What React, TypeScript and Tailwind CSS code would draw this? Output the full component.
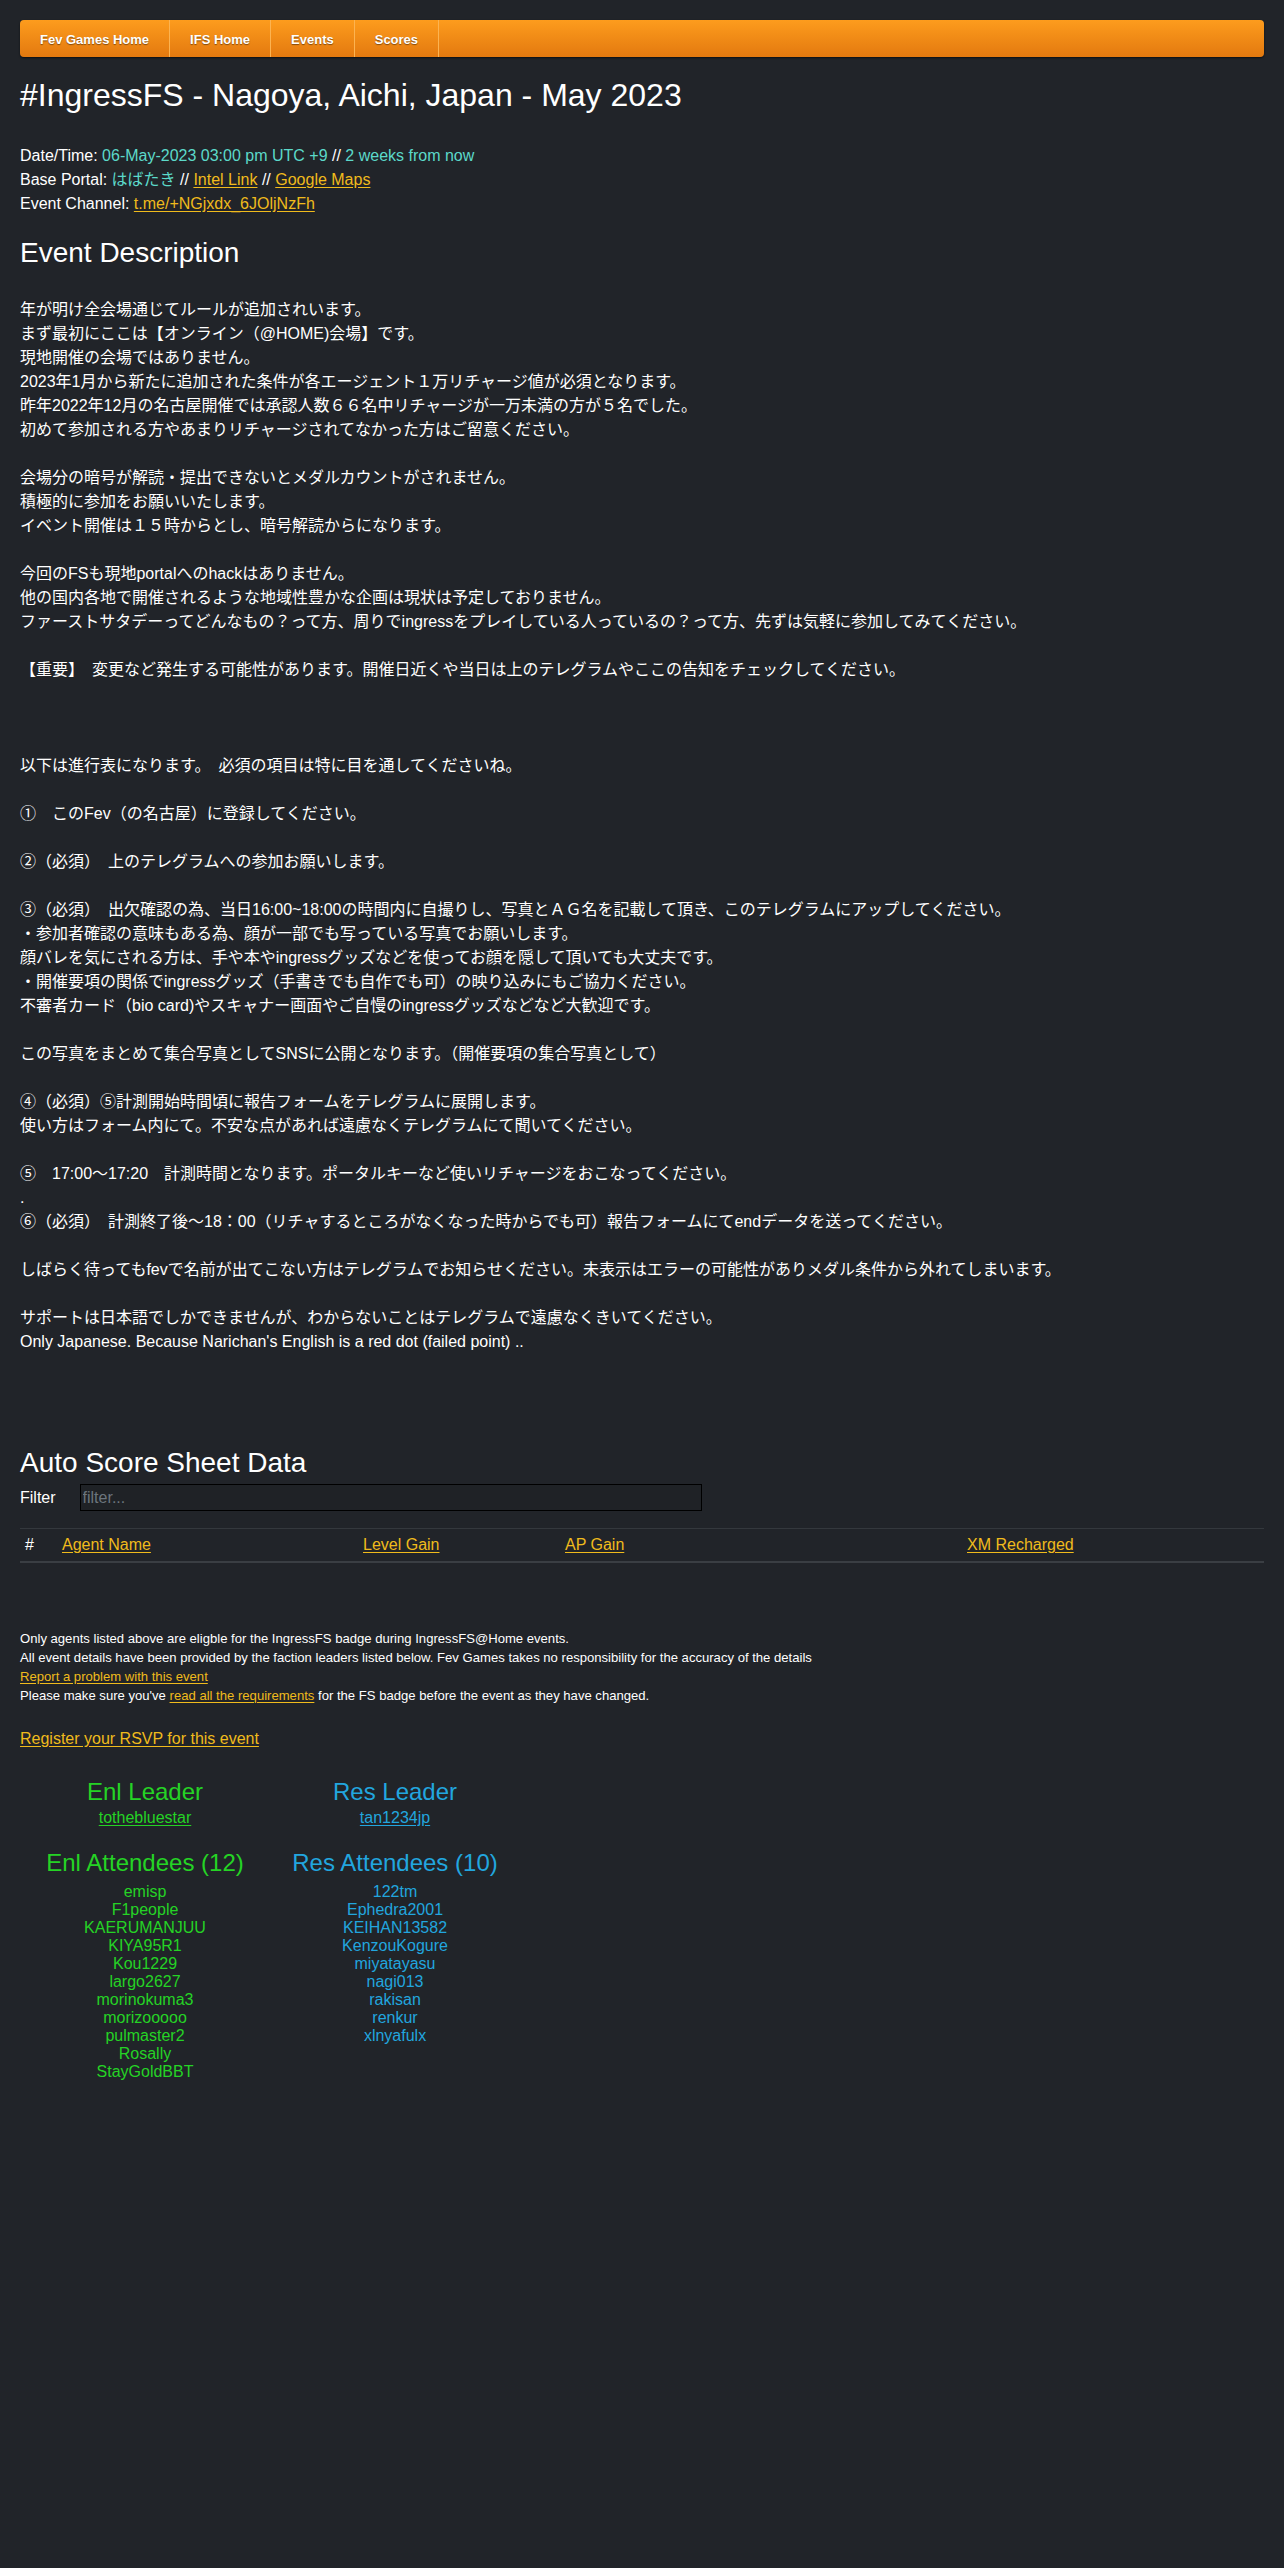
const navItems = ["Fev Games Home", "IFS Home", "Events", "Scores"];

const description: string[] = [
  "年が明け全会場通じてルールが追加されいます。",
  "まず最初にここは【オンライン（@HOME)会場】です。",
  "現地開催の会場ではありません。",
  "2023年1月から新たに追加された条件が各エージェント１万リチャージ値が必須となります。",
  "昨年2022年12月の名古屋開催では承認人数６６名中リチャージが一万未満の方が５名でした。",
  "初めて参加される方やあまりリチャージされてなかった方はご留意ください。",
  "",
  "会場分の暗号が解読・提出できないとメダルカウントがされません。",
  "積極的に参加をお願いいたします。",
  "イベント開催は１５時からとし、暗号解読からになります。",
  "",
  "今回のFSも現地portalへのhackはありません。",
  "他の国内各地で開催されるような地域性豊かな企画は現状は予定しておりません。",
  "ファーストサタデーってどんなもの？って方、周りでingressをプレイしている人っているの？って方、先ずは気軽に参加してみてください。",
  "",
  "【重要】　変更など発生する可能性があります。開催日近くや当日は上のテレグラムやここの告知をチェックしてください。",
  "",
  "",
  "",
  "以下は進行表になります。　必須の項目は特に目を通してくださいね。",
  "",
  "①　このFev（の名古屋）に登録してください。",
  "",
  "②（必須）　上のテレグラムへの参加お願いします。",
  "",
  "③（必須）　出欠確認の為、当日16:00~18:00の時間内に自撮りし、写真とＡＧ名を記載して頂き、このテレグラムにアップしてください。",
  "・参加者確認の意味もある為、顔が一部でも写っている写真でお願いします。",
  "顔バレを気にされる方は、手や本やingressグッズなどを使ってお顔を隠して頂いても大丈夫です。",
  "・開催要項の関係でingressグッズ（手書きでも自作でも可）の映り込みにもご協力ください。",
  "不審者カード（bio card)やスキャナー画面やご自慢のingressグッズなどなど大歓迎です。",
  "",
  "この写真をまとめて集合写真としてSNSに公開となります。（開催要項の集合写真として）",
  "",
  "④（必須）⑤計測開始時間頃に報告フォームをテレグラムに展開します。",
  "使い方はフォーム内にて。不安な点があれば遠慮なくテレグラムにて聞いてください。",
  "",
  "⑤　17:00～17:20　計測時間となります。ポータルキーなど使いリチャージをおこなってください。",
  ".",
  "⑥（必須）　計測終了後～18：00（リチャするところがなくなった時からでも可）報告フォームにてendデータを送ってください。",
  "",
  "しばらく待ってもfevで名前が出てこない方はテレグラムでお知らせください。未表示はエラーの可能性がありメダル条件から外れてしまいます。",
  "",
  "サポートは日本語でしかできませんが、わからないことはテレグラムで遠慮なくきいてください。",
  "Only Japanese. Because Narichan's English is a red dot (failed point) ..",
];

const enlAgents = [
  "emisp",
  "F1people",
  "KAERUMANJUU",
  "KIYA95R1",
  "Kou1229",
  "largo2627",
  "morinokuma3",
  "morizooooo",
  "pulmaster2",
  "Rosally",
  "StayGoldBBT",
];

const resAgents = [
  "122tm",
  "Ephedra2001",
  "KEIHAN13582",
  "KenzouKogure",
  "miyatayasu",
  "nagi013",
  "rakisan",
  "renkur",
  "xlnyafulx",
];

const link = "text-[#f0bb1c] underline underline-offset-2";

const App = () => (
  <div
    className="min-h-[2568px] bg-[#212429] text-white px-[20px] pt-[20px] text-[16px] leading-[24px]"
    style={{ fontFamily: '"Liberation Sans", "Noto Sans CJK JP", sans-serif' }}
  >
    <nav className="flex h-[37px] rounded-[4px] bg-gradient-to-b from-[#fd9c1d] to-[#e3790f] shadow-[0_1px_2px_rgba(0,0,0,0.6)]">
      {navItems.map((item) => (
        <a
          key={item}
          href="#"
          className="flex items-center px-[20px] pt-[3px] border-r border-[#fcb351] text-[13px] font-bold text-white [text-shadow:0_1px_1px_rgba(0,0,0,0.45)]"
        >
          {item}
        </a>
      ))}
    </nav>

    <h1 className="mt-[19px] text-[32px] leading-[38px]">#IngressFS - Nagoya, Aichi, Japan - May 2023</h1>

    <div className="mt-[30px]">
      <div>
        Date/Time: <span className="text-[#5cd9c9]">06-May-2023 03:00 pm UTC +9</span> //{" "}
        <span className="text-[#5cd9c9]">2 weeks from now</span>
      </div>
      <div>
        Base Portal: <span className="text-[#5cd9c9]">はばたき</span> // <a href="#" className={link}>Intel Link</a> //{" "}
        <a href="#" className={link}>Google Maps</a>
      </div>
      <div>
        Event Channel: <a href="#" className={link}>t.me/+NGjxdx_6JOljNzFh</a>
      </div>
    </div>

    <h3 className="mt-[20px] text-[28px] leading-[34px]">Event Description</h3>

    <div className="mt-[28px]">
      {description.map((line, i) => (
        <div key={i} className="min-h-[24px] whitespace-pre-wrap">
          {line}
        </div>
      ))}
    </div>

    <h3 className="mt-[92px] text-[28px] leading-[34px]">Auto Score Sheet Data</h3>

    <div className="mt-[4px] flex items-center gap-[24px]">
      <label>Filter</label>
      <input
        placeholder="filter..."
        className="h-[27px] w-[622px] border border-black bg-[#1f2226] px-[2px] text-white placeholder:text-[#6c757d] outline-none"
      />
    </div>

    <div className="mt-[17px] grid grid-cols-[37px_301px_202px_402px_1fr] border-t border-b-2 border-t-[#34383d] border-b-[#3a3e43] py-[4px]">
      <div className="pl-[5px]">#</div>
      <div className="pl-[5px]"><a href="#" className={link}>Agent Name</a></div>
      <div className="pl-[5px]"><a href="#" className={link}>Level Gain</a></div>
      <div className="pl-[5px]"><a href="#" className={link}>AP Gain</a></div>
      <div className="pl-[5px]"><a href="#" className={link}>XM Recharged</a></div>
    </div>

    <div className="mt-[66px] text-[13.1px] leading-[19px]">
      <div>Only agents listed above are eligble for the IngressFS badge during IngressFS@Home events.</div>
      <div>All event details have been provided by the faction leaders listed below. Fev Games takes no responsibility for the accuracy of the details</div>
      <div><a href="#" className={link}>Report a problem with this event</a></div>
      <div>
        Please make sure you've <a href="#" className={link}>read all the requirements</a> for the FS badge before the event as they have changed.
      </div>
    </div>

    <div className="mt-[22px]">
      <a href="#" className={link}>Register your RSVP for this event</a>
    </div>

    <div className="mt-[26px] grid grid-cols-[250px_250px] text-center">
      <div className="text-[#25d325]">
        <h3 className="text-[24px] leading-[29px]">Enl Leader</h3>
        <a href="#" className="underline underline-offset-2">tothebluestar</a>
      </div>
      <div className="text-[#22a6df]">
        <h3 className="text-[24px] leading-[29px]">Res Leader</h3>
        <a href="#" className="underline underline-offset-2">tan1234jp</a>
      </div>
      <div className="mt-[18px] text-[#25d325]">
        <h3 className="text-[24px] leading-[29px]">Enl Attendees (12)</h3>
        <div className="mt-[6px] leading-[18px]">
          {enlAgents.map((a) => (
            <div key={a}>{a}</div>
          ))}
        </div>
      </div>
      <div className="mt-[18px] text-[#22a6df]">
        <h3 className="text-[24px] leading-[29px]">Res Attendees (10)</h3>
        <div className="mt-[6px] leading-[18px]">
          {resAgents.map((a) => (
            <div key={a}>{a}</div>
          ))}
        </div>
      </div>
    </div>
  </div>
);

export default App;
